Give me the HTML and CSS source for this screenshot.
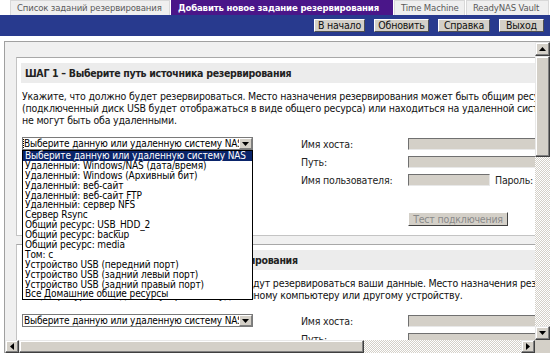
FILE: index.html
```html
<!DOCTYPE html>
<html lang="ru">
<head>
<meta charset="utf-8">
<title>Добавить новое задание резервирования</title>
<link rel="stylesheet" href="styles.css">
</head>
<body>
<div class="tabs">
  <span class="tab tab-list">Список заданий резервирования</span>
  <span class="tab tab-active">Добавить новое задание резервирования</span>
  <span class="tab tab-tm">Time Machine</span>
  <span class="tab tab-vault">ReadyNAS Vault</span>
</div>
<div class="toolbar">
  <span class="tbtn b-home">В начало</span>
  <span class="tbtn b-refresh">Обновить</span>
  <span class="tbtn b-help">Справка</span>
  <span class="tbtn b-exit">Выход</span>
</div>
<div class="frame">
  <div class="viewport">
    <div class="content">
      <div class="box">
        <div class="step">ШАГ 1 – Выберите путь источника резервирования</div>
        <div class="desc">Укажите, что должно будет резервироваться. Место назначения резервирования может быть общим ресурсом на этом устройстве<br>(подключенный диск USB будет отображаться в виде общего ресурса) или находиться на удаленной системе, но источник и назначение<br>не могут быть оба удаленными.</div>
        <div class="form">
          <div class="sel-cell">
            <div class="select"><span class="sel-text"><span class="focus">Выберите данную или удаленную систему NAS</span></span><span class="sel-btn"><svg width="7" height="4" viewBox="0 0 7 4"><polygon points="0,0 7,0 3.5,4" fill="#000"/></svg></span></div>
            <ul class="droplist">
              <li class="hl">Выберите данную или удаленную систему NAS</li>
              <li>Удаленный: Windows/NAS (дата/время)</li>
              <li>Удаленный: Windows (Архивный бит)</li>
              <li>Удаленный: веб-сайт</li>
              <li>Удаленный: веб-сайт FTP</li>
              <li>Удаленный: сервер NFS</li>
              <li>Сервер Rsync</li>
              <li>Общий ресурс: USB_HDD_2</li>
              <li>Общий ресурс: backup</li>
              <li>Общий ресурс: media</li>
              <li>Том: c</li>
              <li>Устройство USB (передний порт)</li>
              <li>Устройство USB (задний левый порт)</li>
              <li>Устройство USB (задний правый порт)</li>
              <li>Все Домашние общие ресурсы</li>
            </ul>
          </div>
          <span class="lbl">Имя хоста:</span>
          <span class="inp wide"></span>
          <span class="lbl r2">Путь:</span>
          <span class="inp wide r2"></span>
          <span class="lbl r3">Имя пользователя:</span>
          <span class="pair r3"><span class="inp short"></span><span class="lbl">Пароль:</span><span class="inp short"></span></span>
          <span class="test">Тест подключения</span>
        </div>
      </div>
      <div class="box">
        <div class="step">ШАГ 2 – Выберите путь назначения резервирования</div>
        <div class="desc">Укажите, на какой ресурс или на устройство будут резервироваться ваши данные. Место назначения резервирования может быть<br>общим ресурсом на данном устройстве, удаленному компьютеру или другому устройству.</div>
        <div class="form form-dest">
          <div class="sel-cell">
            <div class="select"><span class="sel-text">Выберите данную или удаленную систему NAS</span><span class="sel-btn"><svg width="7" height="4" viewBox="0 0 7 4"><polygon points="0,0 7,0 3.5,4" fill="#000"/></svg></span></div>
          </div>
          <span class="lbl">Имя хоста:</span>
          <span class="inp wide"></span>
          <span class="lbl r2">Путь:</span>
          <span class="inp wide r2"></span>
        </div>
      </div>
    </div>
  </div>
  <div class="vscroll">
    <span class="sbtn"><svg width="7" height="4" viewBox="0 0 7 4"><polygon points="3.5,0 7,4 0,4" fill="#000"/></svg></span>
    <span class="vthumb"></span>
    <span class="track"></span>
    <span class="sbtn"><svg width="7" height="4" viewBox="0 0 7 4"><polygon points="0,0 7,0 3.5,4" fill="#000"/></svg></span>
  </div>
  <div class="hscroll">
    <span class="sbtn"><svg width="4" height="7" viewBox="0 0 4 7"><polygon points="4,0 4,7 0,3.5" fill="#000"/></svg></span>
    <span class="hthumb"></span>
    <span class="track"></span>
    <span class="sbtn"><svg width="4" height="7" viewBox="0 0 4 7"><polygon points="0,0 4,3.5 0,7" fill="#000"/></svg></span>
  </div>
  <div class="corner"></div>
</div>
</body>
</html>
```

FILE: styles.css
```css
* { box-sizing: border-box; }
html, body { margin: 0; padding: 0; }
body {
  width: 550px;
  height: 357px;
  overflow: hidden;
  background: #fff;
  color: #000;
  font-family: "DejaVu Sans Condensed", "DejaVu Sans", sans-serif;
  font-size: 10.5px;
  letter-spacing: -0.2px;
}

/* Tabs */
.tabs {
  display: flex;
  gap: 1px;
  padding-left: 10px;
  height: 15px;
}
.tab {
  height: 15px;
  line-height: 14px;
  padding: 0 6px;
  font-size: 9.5px;
  letter-spacing: -0.15px;
  color: #5a5a5a;
  background: #efefef;
  border: 1px solid #d8d8d8;
  border-bottom: none;
  white-space: nowrap;
}
.tab-list { width: 160px; }
.tab-active {
  width: 222px;
  background: #4a1689;
  border-color: #4a1689;
  color: #fff;
  font-weight: bold;
}
.tab-tm { width: 71px; }
.tab-vault { width: 83px; }

/* Toolbar */
.toolbar {
  height: 21px;
  background: #283a8e;
  display: flex;
  justify-content: flex-end;
  align-items: center;
  gap: 9px;
  padding-right: 6px;
}
.tbtn {
  height: 13px;
  line-height: 11px;
  background: #d4d0c8;
  border: 1px solid;
  border-color: #fff #505050 #505050 #fff;
  text-align: center;
  white-space: nowrap;
  color: #111;
}
.b-home { width: 51px; }
.b-refresh { width: 55px; }
.b-help { width: 52px; }
.b-exit { width: 45px; }

/* Frame with scrollbars */
.frame {
  margin: 5px 0 0 4px;
  width: 546px;
  height: 312px;
  border-left: 1px solid #a0a0a0;
  border-top: 1px solid #a0a0a0;
  display: grid;
  grid-template-columns: 530px 15px;
  grid-template-rows: 298px 13px;
}
.viewport {
  overflow: hidden;
  position: relative;
  background: #f0f0f0;
}
.content {
  width: 760px;
  padding: 15px 0 0 11px;
  background: #f0f0f0;
}
.box {
  background: #fff;
  border: 1px solid #c4c4c4;
  border-top-color: #a8a8a8;
  padding: 5px 4px 13px;
  margin-bottom: 8px;
}
.step {
  height: 20px;
  line-height: 20px;
  padding-left: 4px;
  background: #ececec;
  font-weight: bold;
  letter-spacing: -0.3px;
  color: #222;
}
.desc {
  margin: 7px 0 0 1px;
  line-height: 12px;
  white-space: nowrap;
  color: #111;
}
.form {
  margin: 11px 0 0 1px;
  display: grid;
  grid-template-columns: 279px 107px auto;
  grid-auto-rows: 13px;
  row-gap: 5px;
  align-items: center;
}
.form-dest { margin-top: 13px; }
.sel-cell { position: relative; height: 13px; }
.select {
  width: 231px;
  height: 13px;
  border: 1px solid #7a7a7a;
  background: #fff;
  display: flex;
  align-items: center;
  font-size: 10px;
  letter-spacing: -0.15px;
}
.sel-text {
  flex: 1;
  padding-left: 1px;
  line-height: 11px;
  white-space: nowrap;
  overflow: hidden;
}
.focus { outline: 1px dotted #000; outline-offset: 0; }
.sel-btn {
  flex: none;
  width: 13px;
  height: 11px;
  background: #d4d0c8;
  border: 1px solid;
  border-color: #fff #808080 #808080 #fff;
  display: flex;
  align-items: center;
  justify-content: center;
}
.droplist {
  position: absolute;
  left: 0;
  top: 13px;
  width: 231px;
  margin: 0;
  padding: 0;
  list-style: none;
  background: #fff;
  border: 1px solid #000;
  z-index: 5;
  font-size: 10px;
  letter-spacing: -0.1px;
}
.droplist li {
  height: 9.9px;
  line-height: 9.9px;
  padding-left: 2px;
  white-space: nowrap;
}
.droplist li.hl { background: #0a246a; color: #fff; }
.lbl { white-space: nowrap; color: #222; }
.inp {
  height: 12px;
  background: #d4d0c8;
  border: 1px solid;
  border-color: #707070 #e8e8e8 #e8e8e8 #707070;
}
.inp.wide { width: 200px; }
.r2 { grid-row: 2; }
.r3 { grid-row: 3; }
.form > .lbl.r2, .form > .lbl.r3 { grid-column: 2; }
.form > .inp.r2, .form > .pair { grid-column: 3; }
.pair { display: flex; align-items: center; gap: 5px; }
.inp.short { width: 82px; }
.test {
  grid-column: 3;
  grid-row: 5;
  width: 100px;
  height: 14px;
  line-height: 12px;
  margin-top: 6px;
  text-align: center;
  color: #8a8a8a;
  background: #d4d0c8;
  border: 1px solid;
  border-color: #fff #404040 #404040 #fff;
  white-space: nowrap;
}

/* Scrollbars */
.vscroll, .hscroll { display: flex; background: #d4d0c8; }
.vscroll { flex-direction: column; }
.sbtn {
  flex: none;
  width: 15px;
  height: 14px;
  background: #d4d0c8;
  border: 1px solid;
  border-color: #e8e8e8 #404040 #404040 #e8e8e8;
  box-shadow: inset -1px -1px #808080, inset 1px 1px #fff;
  display: flex;
  align-items: center;
  justify-content: center;
}
.hscroll .sbtn { width: 14px; height: 13px; }
.vthumb {
  flex: none;
  height: 101px;
  background: #d4d0c8;
  border: 1px solid;
  border-color: #e8e8e8 #404040 #404040 #e8e8e8;
  box-shadow: inset -1px -1px #808080, inset 1px 1px #fff;
}
.hthumb {
  flex: none;
  width: 345px;
  background: #d4d0c8;
  border: 1px solid;
  border-color: #e8e8e8 #404040 #404040 #e8e8e8;
  box-shadow: inset -1px -1px #808080, inset 1px 1px #fff;
}
.track {
  flex: 1;
  background: repeating-conic-gradient(#d4d0c8 0 25%, #fff 0 50%) 0 0 / 2px 2px;
}
.corner { background: #d4d0c8; }
```
